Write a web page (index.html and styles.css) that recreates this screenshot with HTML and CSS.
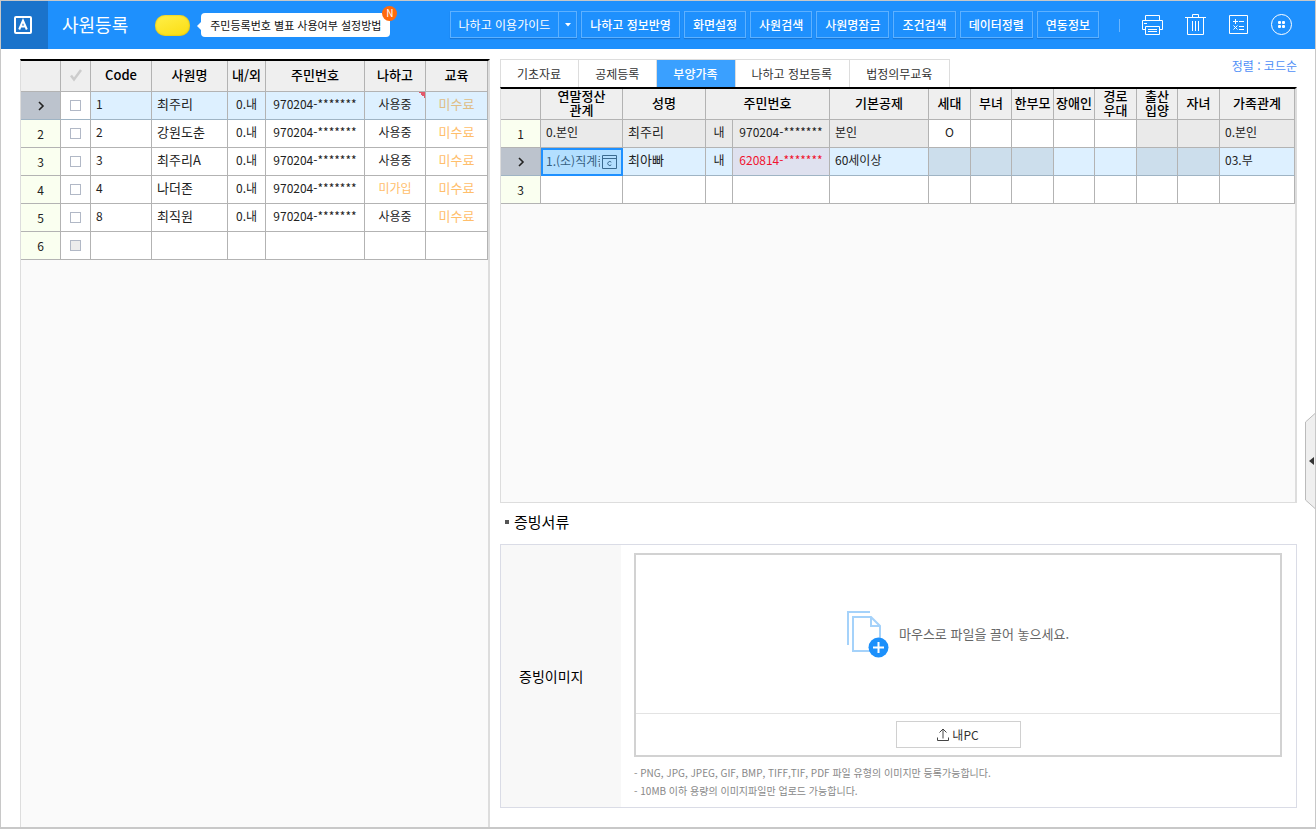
FILE: index.html
```html
<!DOCTYPE html>
<html lang="ko">
<head>
<meta charset="utf-8">
<meta name="viewport" content="width=device-width, initial-scale=1">
<title>사원등록</title>
<link rel="stylesheet" href="styles.css">
</head>
<body>
<header class="topbar">
  <a class="brand" href="#" aria-label="홈">
    <svg width="20" height="20" viewBox="0 0 20 20" fill="none" stroke="#fff" stroke-width="2"><rect x="2" y="2" width="16" height="16" rx="1"/><path d="M6.2 14.5 10 5.5l3.8 9M7.6 11.6h4.8"/></svg>
  </a>
  <h1 class="title">사원등록</h1>
  <span class="pill"></span>
  <a class="callout" href="#">주민등록번호 별표 사용여부 설정방법<span class="badge">N</span></a>
  <nav class="tools">
    <div class="split">
      <button class="split-main" type="button">나하고 이용가이드</button>
      <button class="split-arrow" type="button" aria-label="펼치기"><svg width="6" height="4" viewBox="0 0 6 4"><path d="M0 0h6L3 3.4z" fill="#fff"/></svg></button>
    </div>
    <button class="tool" type="button">나하고 정보반영</button>
    <button class="tool" type="button">화면설정</button>
    <button class="tool" type="button">사원검색</button>
    <button class="tool" type="button">사원명잠금</button>
    <button class="tool" type="button">조건검색</button>
    <button class="tool" type="button">데이터정렬</button>
    <button class="tool" type="button">연동정보</button>
  </nav>
  <span class="divider"></span>
  <div class="icons">
    <button class="icon" type="button" aria-label="인쇄"><svg width="22" height="22" viewBox="0 0 22 22" fill="none" stroke="#fff"><path d="M3.500 6.500V1.500h14v5M3.500 15.500h-3v-9h20v9h-3M3.500 12.500h14v8h-14zM2 9.500h3M6 15.500h9M6 17.500h9"/></svg></button>
    <button class="icon" type="button" aria-label="삭제"><svg width="22" height="22" viewBox="0 0 22 22" fill="none" stroke="#fff"><path d="M0 3.500h21M7.500 3.500v-3h6v3M2.500 3.500v17h16v-17M7.500 7v10M10.500 7v10M13.500 7v10"/></svg></button>
    <button class="icon" type="button" aria-label="계산기"><svg width="22" height="22" viewBox="0 0 22 22" fill="none" stroke="#fff"><path d="M1.500 1.500h18v18h-18zM5 7.500h5M7.500 5v5M11 7.500h5M5.500 11.500l4 4M9.500 11.500l-4 4M11 12.500h5M11 15.500h5"/></svg></button>
    <button class="icon" type="button" aria-label="더보기"><svg width="22" height="22" viewBox="0 0 22 22"><circle cx="10.500" cy="10.500" r="10" fill="none" stroke="#fff"/><g fill="#fff"><rect x="7" y="7" width="3" height="3" rx="1"/><rect x="11" y="7" width="3" height="3" rx="1"/><rect x="7" y="11" width="3" height="3" rx="1"/><rect x="11" y="11" width="3" height="3" rx="1"/></g></svg></button>
  </div>
</header>

<main class="main">
  <section class="panel employees" aria-label="사원 목록">
    <table class="grid">
      <colgroup><col class="w40"><col class="w30"><col class="w61"><col class="w76"><col class="w38"><col class="w99"><col class="w61"><col class="w62"></colgroup>
      <thead>
        <tr><th></th><th><svg class="tick" width="14" height="14" viewBox="0 0 14 14" fill="none" stroke="#ccc" stroke-width="2.500"><path d="M2 7.500 5 11.500 12 2"/></svg></th><th>Code</th><th>사원명</th><th>내/외</th><th>주민번호</th><th>나하고</th><th>교육</th></tr>
      </thead>
      <tbody>
        <tr class="active"><td class="no"><svg width="8" height="10" viewBox="0 0 8 10" fill="none" stroke="#222" stroke-width="1.600"><path d="M2 1l4 4-4 4"/></svg></td><td class="check"><input type="checkbox" aria-label="1번 선택"></td><td>1</td><td class="name">최주리</td><td class="mid">0.내</td><td class="mid">970204-*******</td><td class="mid flagged">사용중</td><td class="mid wait">미수료</td></tr>
        <tr><td class="no">2</td><td class="check"><input type="checkbox" aria-label="2번 선택"></td><td>2</td><td class="name">강원도춘</td><td class="mid">0.내</td><td class="mid">970204-*******</td><td class="mid">사용중</td><td class="mid wait">미수료</td></tr>
        <tr><td class="no">3</td><td class="check"><input type="checkbox" aria-label="3번 선택"></td><td>3</td><td class="name">최주리A</td><td class="mid">0.내</td><td class="mid">970204-*******</td><td class="mid">사용중</td><td class="mid wait">미수료</td></tr>
        <tr><td class="no">4</td><td class="check"><input type="checkbox" aria-label="4번 선택"></td><td>4</td><td class="name">나더존</td><td class="mid">0.내</td><td class="mid">970204-*******</td><td class="mid none">미가입</td><td class="mid wait">미수료</td></tr>
        <tr><td class="no">5</td><td class="check"><input type="checkbox" aria-label="5번 선택"></td><td>8</td><td class="name">최직원</td><td class="mid">0.내</td><td class="mid">970204-*******</td><td class="mid">사용중</td><td class="mid wait">미수료</td></tr>
        <tr><td class="no">6</td><td class="check"><input type="checkbox" disabled aria-label="6번 선택"></td><td></td><td></td><td></td><td></td><td></td><td></td></tr>
      </tbody>
    </table>
  </section>

  <section class="detail">
    <div class="tabrow">
      <div class="tabs" role="tablist">
        <button class="tab" role="tab" type="button">기초자료</button>
        <button class="tab" role="tab" type="button">공제등록</button>
        <button class="tab selected" role="tab" type="button" aria-selected="true">부양가족</button>
        <button class="tab" role="tab" type="button">나하고 정보등록</button>
        <button class="tab" role="tab" type="button">법정의무교육</button>
      </div>
      <a class="sort" href="#">정렬 : 코드순</a>
    </div>

    <div class="panel family">
      <table class="grid">
        <colgroup><col class="w40"><col class="w82"><col class="w83"><col class="w27"><col class="w97"><col class="w99"><col class="w42"><col class="w41"><col class="w42"><col class="w41"><col class="w42"><col class="w41"><col class="w42"><col class="w75"></colgroup>
        <thead>
          <tr><th></th><th>연말정산<br>관계</th><th>성명</th><th colspan="2">주민번호</th><th>기본공제</th><th>세대</th><th>부녀</th><th>한부모</th><th>장애인</th><th>경로<br>우대</th><th>출산<br>입양</th><th>자녀</th><th>가족관계</th></tr>
        </thead>
        <tbody>
          <tr><td class="no">1</td><td class="locked">0.본인</td><td class="name locked">최주리</td><td class="mid locked">내</td><td class="mid locked">970204-*******</td><td class="locked">본인</td><td class="mid">O</td><td></td><td></td><td></td><td></td><td class="locked"></td><td class="locked"></td><td class="locked">0.본인</td></tr>
          <tr class="active"><td class="no"><svg width="8" height="10" viewBox="0 0 8 10" fill="none" stroke="#222" stroke-width="1.600"><path d="M2 1l4 4-4 4"/></svg></td><td class="editing"><div class="editor"><input type="text" value="1.(소)직계존속" aria-label="연말정산관계"><button type="button" aria-label="코드 도움"><svg width="15" height="14" viewBox="0 0 15 14" fill="none" stroke="#3a6a8f"><path d="M.5.5h14v13H.5zM.5 3.500h14"/><path d="M9.300 7.200a2 2 0 1 0 0 2.600"/></svg></button></div></td><td class="name">최아빠</td><td class="mid">내</td><td class="mid error">620814-*******</td><td>60세이상</td><td class="locked"></td><td class="locked"></td><td class="locked"></td><td></td><td></td><td class="locked"></td><td class="locked"></td><td>03.부</td></tr>
          <tr><td class="no">3</td><td></td><td></td><td></td><td></td><td></td><td></td><td></td><td></td><td></td><td></td><td></td><td></td><td></td></tr>
        </tbody>
      </table>
    </div>

    <h2 class="subtitle">증빙서류</h2>
    <div class="evidence">
      <div class="evidence-label">증빙이미지</div>
      <div class="evidence-body">
        <div class="dropzone">
          <div class="drop-area">
            <svg width="42" height="47" viewBox="0 0 42 47" fill="none"><g stroke="#a5d2fa" stroke-width="2"><path d="M1 34V1h22"/><path d="M6 40V6h18l9 9v25z"/><path d="M24 6v9h9"/></g><circle cx="31.500" cy="36.500" r="10" fill="#1c90fb"/><path d="M31.500 31v11M26 36.500h11" stroke="#fff" stroke-width="2"/></svg>
            <span>마우스로 파일을 끌어 놓으세요.</span>
          </div>
          <div class="drop-foot">
            <button class="pc" type="button"><svg width="12" height="13" viewBox="0 0 12 13" fill="none" stroke="#444"><path d="M.5 9.500v3h11v-3M6 10.500V1.500M2.500 4.500 6 1l3.500 3.500"/></svg>내PC</button>
          </div>
        </div>
        <ul class="notes">
          <li>- PNG, JPG, JPEG, GIF, BMP, TIFF,TIF, PDF 파일 유형의 이미지만 등록가능합니다.</li>
          <li>- 10MB 이하 용량의 이미지파일만 업로드 가능합니다.</li>
        </ul>
      </div>
    </div>
  </section>
  <button class="handle" type="button" aria-label="패널 열기"><svg width="10" height="96" viewBox="0 0 10 96"><path d="M10 .5.500 9v78L10 95.500" fill="#efefef" stroke="#bbb"/><path d="M9 44v8L4 48z" fill="#333"/></svg></button>
</main>
</body>
</html>
```
FILE: styles.css
```css
* { box-sizing: border-box; }

body {
  margin: 0;
  min-height: 100vh;
  display: flex;
  flex-direction: column;
  border: 1px solid #c8c8c8;
  border-bottom-width: 2px;
  background: #fff;
  color: #222;
  font: 12px/16px "Noto Sans CJK KR", sans-serif;
}

button, input { font: inherit; color: inherit; }
button { padding: 0; border: 0; background: none; cursor: pointer; }
a { color: inherit; text-decoration: none; }
svg { display: block; }

/* Top bar */
.topbar {
  display: flex;
  align-items: center;
  height: 48px;
  padding-right: 22px;
  background: #1e90fd;
  color: #fff;
}
.brand {
  display: grid;
  place-items: center;
  width: 47px;
  height: 48px;
  padding-right: 3px;
  background: #1a73cb;
}
.title {
  margin: 0 27px 0 14px;
  padding-bottom: 3px;
  font-size: 18px;
  line-height: 24px;
  font-weight: 400;
  white-space: nowrap;
}
.pill {
  width: 35px;
  height: 21px;
  border-radius: 10px;
  background: linear-gradient(160deg, #fff04a, #fbdc10);
  box-shadow: inset 0 0 2px #c9a800;
}
.callout {
  position: relative;
  margin-left: 11px;
  padding: 4px 9px;
  border-radius: 4px;
  background: #fff;
  color: #111;
  font-size: 11px;
  white-space: nowrap;
}
.callout::before {
  content: "";
  position: absolute;
  left: -4px;
  top: 9px;
  border: 4px solid transparent;
  border-left-width: 0;
  border-right-color: #fff;
}
.badge {
  position: absolute;
  top: -7px;
  right: -7px;
  width: 15px;
  height: 15px;
  border-radius: 50%;
  background: #ff6a0c;
  color: #fff;
  font-size: 10px;
  line-height: 14px;
  text-align: center;
}
.tools { display: flex; gap: 4px; margin-left: auto; padding-bottom: 1px; }
.tool, .split {
  height: 27px;
  border: 1px solid #5eb1ff;
  box-shadow: 0 1px 1px #1878d8;
  font-weight: 500;
  white-space: nowrap;
}
.tool { padding: 0 8px; }
.split { display: flex; font-weight: 400; }
.split-main { padding: 0 8px; white-space: nowrap; }
.split-arrow {
  display: grid;
  place-items: center;
  width: 18px;
  border-left: 1px solid #5eb1ff;
}
.divider { width: 1px; height: 13px; margin: 0 22px 0 20px; background: #6ab6ff; }
.icons { display: flex; gap: 21px; }

/* Layout */
.main {
  position: relative;
  flex: 1;
  display: flex;
  gap: 10px;
  padding: 10px 18px 0 19px;
}
.detail { flex: 1; min-width: 0; display: flex; flex-direction: column; padding-bottom: 19px; }
.panel {
  border: 1px solid #ddd;
  border-top: 2px solid #000;
  border-right-width: 2px;
  background: #fafafa;
}
.employees { flex: 0 0 470px; border-bottom: 0; }
.family { flex: 1; }

/* Grids */
.grid { width: 100%; table-layout: fixed; border-collapse: separate; border-spacing: 0; color: #222; }
.grid th, .grid td {
  height: 28px;
  padding: 0 5px 3px;
  border-right: 1px solid #b3b3b3;
  border-bottom: 1px solid #b3b3b3;
  white-space: nowrap;
}
.grid th {
  height: 31px;
  padding: 0 0 2px;
  background: #efefef;
  font-size: 13px;
  font-weight: 500;
  line-height: 14px;
  color: #000;
}
.grid td { background: #fff; }
.grid td.name { font-size: 13px; }
.grid td.mid { padding: 0 0 3px; text-align: center; }
.grid td.wait { font-size: 13px; color: #ffbe6b; }
.grid td.none { color: #ffbe6b; }
.grid td.locked { background: #eaeaea; }
.grid td.no { padding: 0; background: #fafff0; text-align: center; }
.grid td.check { padding: 0; line-height: 0; }
.grid .active td { background: #ddf0ff; border-bottom-color: #9fb4c4; }
.grid .active td.locked { background: #ccdeec; }
.grid .active td.error { background: #dfe1ef; color: #f0142f; }
.grid .active td.wait { color: #dfbd86; }
.grid .active td.no { background: #bcc3cd; }
.grid .active td.check { background: #fff; }
.grid .active td.flagged {
  background: linear-gradient(45deg, transparent 50%, #e2586a 50%) right top / 6px 6px no-repeat #ddf0ff;
}
.no svg, .tick { margin: 0 auto; }
.check input {
  appearance: none;
  display: block;
  width: 11px;
  height: 11px;
  margin: 0 auto;
  border: 1px solid #b1b8c6;
  background: #fff;
}
.check input:disabled { background: #ececec; }
.grid .active td.editing { padding: 0; border: 0; }
.editor {
  display: flex;
  align-items: center;
  gap: 2px;
  height: 28px;
  padding: 0 4px 0 3px;
  border: 2px solid #1e90ff;
  background: #b3dfff;
}
.editor input {
  flex: 1;
  min-width: 0;
  padding: 0 0 3px;
  border: 0;
  outline: 0;
  background: none;
  color: #36607f;
}

.w27 { width: 27px; }
.w30 { width: 30px; }
.w38 { width: 38px; }
.w40 { width: 40px; }
.w41 { width: 41px; }
.w42 { width: 42px; }
.w61 { width: 61px; }
.w62 { width: 62px; }
.w75 { width: 75px; }
.w76 { width: 76px; }
.w82 { width: 82px; }
.w83 { width: 83px; }
.w97 { width: 97px; }
.w99 { width: 99px; }

/* Tabs */
.tabrow { display: flex; justify-content: space-between; align-items: flex-start; }
.tabs { display: flex; border: 1px solid #ddd; border-bottom: 0; }
.tab { height: 27px; padding: 0 17px 0 16px; border-right: 1px solid #ddd; color: #333; }
.tab:last-child { border-right: 0; }
.tab.selected { background: #3aa0ff; color: #fff; font-weight: 500; }
.sort { color: #4f8ff7; line-height: 13px; }

/* Evidence */
.subtitle {
  display: flex;
  align-items: center;
  gap: 5px;
  margin: 8px 0 12px 5px;
  font-size: 15px;
  line-height: 21px;
  font-weight: 400;
  color: #000;
}
.subtitle::before { content: ""; width: 4px; height: 4px; background: #555; }
.evidence { display: flex; border: 1px solid #dadce6; }
.evidence-label {
  flex: 0 0 120px;
  display: flex;
  align-items: center;
  padding-left: 18px;
  background: #f8f8f8;
  color: #000;
  font-size: 14px;
}
.evidence-body { flex: 1; padding: 8px 14px 7px 13px; }
.dropzone { border: 2px solid #d2d2d2; }
.drop-area {
  display: flex;
  align-items: center;
  justify-content: center;
  gap: 10px;
  height: 158px;
  color: #666;
  font-size: 13px;
}
.drop-foot { display: flex; justify-content: center; padding: 7px 0; border-top: 1px solid #e3e3e3; }
.pc {
  display: flex;
  align-items: center;
  justify-content: center;
  gap: 3px;
  width: 125px;
  height: 27px;
  border: 1px solid #d0d0d0;
  color: #333;
}
.notes {
  margin: 7px 0 0;
  padding: 0;
  list-style: none;
  color: #888;
  font-size: 10px;
  line-height: 18px;
}

.handle { position: absolute; right: 0; top: 364px; }
```
